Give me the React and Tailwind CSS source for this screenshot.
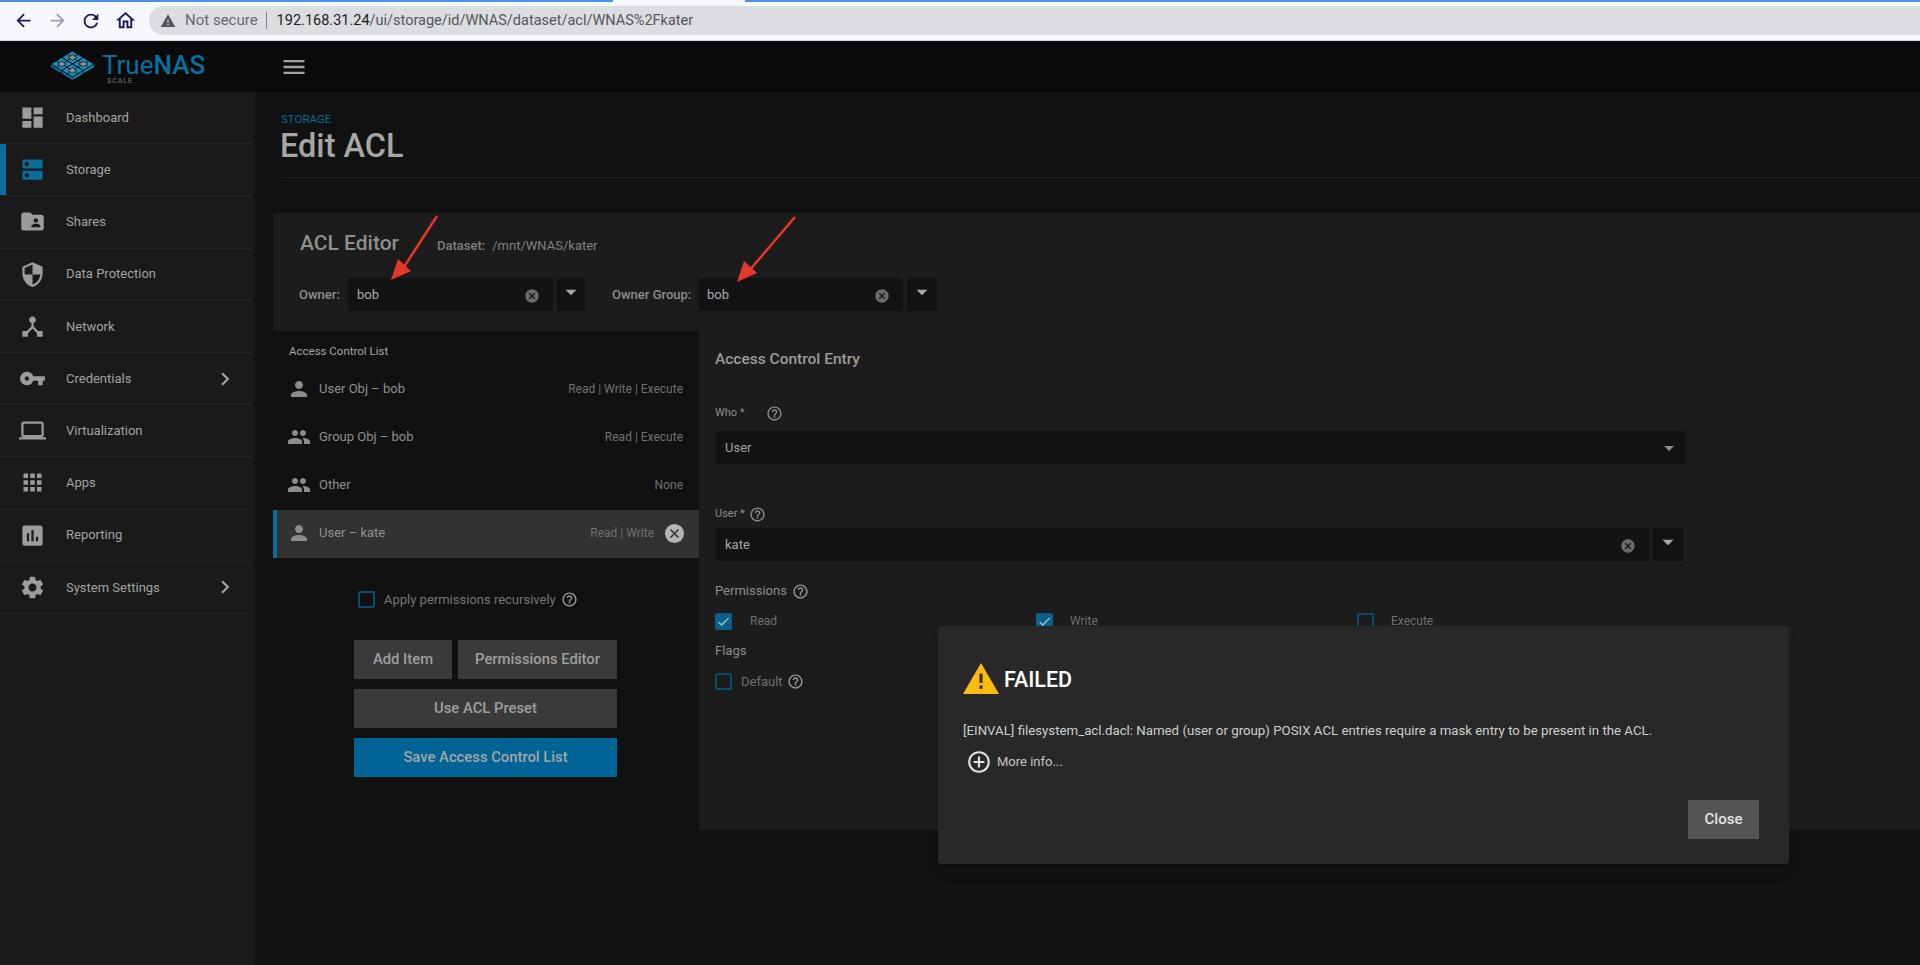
import {
  MdDashboard,
  MdDns,
  MdFolderShared,
  MdSecurity,
  MdDeviceHub,
  MdVpnKey,
  MdLaptop,
  MdApps,
  MdAssessment,
  MdSettings,
  MdChevronRight,
  MdPerson,
  MdGroup,
  MdCancel,
  MdHelpOutline,
  MdWarning,
  MdAddCircleOutline,
  MdArrowDropDown,
  MdCheck,
  MdMenu,
  MdArrowBack,
  MdArrowForward,
  MdRefresh,
  MdOutlineHome,
} from "react-icons/md";

const navItems = [
  { label: "Dashboard", icon: MdDashboard },
  { label: "Storage", icon: MdDns, active: true },
  { label: "Shares", icon: MdFolderShared },
  { label: "Data Protection", icon: MdSecurity },
  { label: "Network", icon: MdDeviceHub },
  { label: "Credentials", icon: MdVpnKey, more: true },
  { label: "Virtualization", icon: MdLaptop },
  { label: "Apps", icon: MdApps },
  { label: "Reporting", icon: MdAssessment },
  { label: "System Settings", icon: MdSettings, more: true },
];

const aclRows = [
  { label: "User Obj – bob", perms: "Read | Write | Execute", icon: MdPerson },
  { label: "Group Obj – bob", perms: "Read | Execute", icon: MdGroup },
  { label: "Other", perms: "None", icon: MdGroup },
  { label: "User – kate", perms: "Read | Write", icon: MdPerson, selected: true },
];

const logoCells = [
  [21.5, 6.5],
  [10.75, 13],
  [32.25, 13],
  [21.5, 19.5],
];

function TrueNasLogo() {
  return (
    <svg width="43" height="29" viewBox="0 0 43 29" className="shrink-0">
      <polygon points="0,13 21.5,26 21.5,29 0,16" fill="#0e6d98" />
      <polygon points="43,13 21.5,26 21.5,29 43,16" fill="#1a80ab" />
      <path d="M10.75 19.5v3M32.25 19.5v3" stroke="#0b0b0b" strokeWidth="0.8" />
      {logoCells.map(([cx, cy]) => (
        <g key={`${cx}-${cy}`}>
          <polygon
            points={`${cx - 10.75},${cy} ${cx},${cy - 6.5} ${cx + 10.75},${cy} ${cx},${cy + 6.5}`}
            fill="#1f8cba"
            stroke="#0b0b0b"
            strokeWidth="0.9"
          />
          <path
            d={`M${cx - 2} ${cy - 1.2} L${cx - 6} ${cy - 3.6} M${cx + 2} ${cy + 1.2} L${cx + 6} ${cy + 3.6} M${cx + 2} ${cy - 1.2} L${cx + 6} ${cy - 3.6} M${cx - 2} ${cy + 1.2} L${cx - 6} ${cy + 3.6}`}
            stroke="#0b0b0b"
            strokeWidth="0.8"
          />
          <polygon
            points={`${cx - 4.5},${cy} ${cx},${cy - 2.8} ${cx + 4.5},${cy} ${cx},${cy + 2.8}`}
            fill="#8c8c8c"
            stroke="#0b0b0b"
            strokeWidth="0.7"
          />
        </g>
      ))}
    </svg>
  );
}

function ChromeBar() {
  return (
    <div className="h-[41px] bg-[#f7f8fd] shrink-0 flex flex-col border-b border-[#d5d5e2]">
      <div className="flex h-[2px] shrink-0">
        <div className="w-[613px] bg-[#4a90e8]" />
        <div className="w-[132px]" />
        <div className="flex-1 bg-[#4a90e8]" />
      </div>
      <div className="flex items-start pl-[6px] pt-[4px] flex-1">
        <div className="w-[34px] h-[29px] flex items-center justify-center text-[#1c1c50]">
          <MdArrowBack size={21} />
        </div>
        <div className="w-[34px] h-[29px] flex items-center justify-center text-[#9b9bb6]">
          <MdArrowForward size={21} />
        </div>
        <div className="w-[34px] h-[29px] flex items-center justify-center text-[#1c1c50]">
          <MdRefresh size={22} />
        </div>
        <div className="w-[34px] h-[29px] flex items-center justify-center text-[#1c1c50]">
          <MdOutlineHome size={23} />
        </div>
        <div className="ml-[7px] flex-1 h-[29px] rounded-l-full bg-[#dcdde0] flex items-center pl-[11px] text-[14.5px]">
          <MdWarning size={16} className="text-[#55565a]" />
          <span className="ml-[9px] text-[15px] text-[#66676c]">Not secure</span>
          <span className="ml-[8px] w-px h-[17px] bg-[#808185]" />
          <span className="ml-[10px] text-[#202124]">192.168.31.24</span>
          <span className="text-[#54565b]">/ui/storage/id/WNAS/dataset/acl/WNAS%2Fkater</span>
        </div>
      </div>
    </div>
  );
}

function TopBar() {
  return (
    <div className="h-[51px] shrink-0 flex bg-[#0b0b0b]">
      <div className="w-[255px] flex items-start pl-[51px] pt-[10px] relative">
        <TrueNasLogo />
        <div className="ml-[8px] mt-[1px] leading-none">
          <div className="text-[26px] text-[#0a6f9d]">
            True<span className="font-medium">NAS</span>
          </div>
          <div className="text-[7px] text-[#7c7c7c] tracking-[1px] ml-[5px]">SCALE</div>
        </div>
      </div>
      <div className="pl-[25px] flex items-center text-[#a3a3a3]">
        <MdMenu size={28} />
      </div>
    </div>
  );
}

function Sidebar() {
  return (
    <aside className="w-[255px] shrink-0 bg-[#1a1a1a] border-r border-[#171717]">
      {navItems.map((item) => {
        const Icon = item.icon;
        return (
          <div
            key={item.label}
            className="h-[52.2px] relative flex items-center border-b border-[#232323] text-[13px] text-[#a2a2a2]"
          >
            {item.active && <div className="absolute left-0 top-0 bottom-0 w-[6px] bg-[#0a6d9c]" />}
            <div className="w-[66px] flex justify-center pr-[2px]">
              <Icon size={27} className={item.active ? "text-[#0a6d9c]" : "text-[#9c9c9c]"} />
            </div>
            <span>{item.label}</span>
            {item.more && <MdChevronRight size={26} className="absolute left-[212px] text-[#a2a2a2]" />}
          </div>
        );
      })}
    </aside>
  );
}

function Combo({ value, width }) {
  return (
    <div className={`${width} h-[35px] bg-[#131313] border border-[#1c1c1c] flex items-center pl-[9px] pr-[13px]`}>
      <span className="flex-1 text-[13px] text-[#a8a8a8]">{value}</span>
      <MdCancel size={16} className="text-[#6c6c6c] mt-[2px]" />
    </div>
  );
}

function DropBtn({ width }) {
  return (
    <div className={`${width} h-[35px] ml-[2px] bg-[#131313] border border-[#1c1c1c] flex items-center justify-center`}>
      <MdArrowDropDown size={26} className="text-[#a8a8a8] -mt-[5px]" />
    </div>
  );
}

function Check({ checked }) {
  return checked ? (
    <div className="w-[17px] h-[17px] rounded-[2px] bg-[#0a6088] flex items-center justify-center">
      <MdCheck size={15} className="text-[#9fc2d3]" />
    </div>
  ) : (
    <div className="w-[17px] h-[17px] rounded-[2px] border-2 border-[#084d6e]" />
  );
}

function AclList() {
  return (
    <div className="w-[426px] shrink-0 bg-[#111111]">
      <div className="h-[34.5px] pl-[16px] flex items-end text-[11.5px] text-[#a5a5a5] pb-[5px]">Access Control List</div>
      {aclRows.map((row) => {
        const Icon = row.icon;
        return (
          <div
            key={row.label}
            className={
              row.selected
                ? "h-[48px] pb-[1px] flex items-center border-l-4 border-[#0a6d9c] bg-[#323232] pl-[10px] pr-[16px]"
                : "h-[48px] pb-[1px] flex items-center pl-[14px] pr-[16px]"
            }
          >
            <Icon size={24} className="text-[#8c8c8c] shrink-0" />
            <span className="ml-[8px] flex-1 text-[13px] text-[#8f8f8f]">{row.label}</span>
            <span className="text-[12px] text-[#707070]">{row.perms}</span>
            {row.selected && (
              <span className="ml-[11px] -mr-[1px] w-[19px] h-[19px] rounded-full bg-[#b5b5b5] flex items-center justify-center text-[#333]">
                <svg width="11" height="11" viewBox="0 0 11 11">
                  <path d="M1.5 1.5 9.5 9.5M9.5 1.5 1.5 9.5" stroke="currentColor" strokeWidth="1.6" />
                </svg>
              </span>
            )}
          </div>
        );
      })}
      <div className="mt-[33px] ml-[85px] flex items-center h-[18px]">
        <Check />
        <span className="ml-[9px] text-[13px] text-[#767676]">Apply permissions recursively</span>
        <MdHelpOutline size={17} className="ml-[5px] text-[#9a9a9a]" />
      </div>
      <div className="ml-[81px] w-[263px] mt-[31px] flex flex-col gap-[10px]">
        <div className="flex gap-[6px]">
          <div className="w-[98px] h-[39px] pt-[1px] bg-[#3a3a3a] flex items-center justify-center text-[14.8px] font-medium text-[#9f9f9f]">
            Add Item
          </div>
          <div className="flex-1 h-[39px] pt-[1px] bg-[#3a3a3a] flex items-center justify-center text-[14.8px] font-medium text-[#9f9f9f]">
            Permissions Editor
          </div>
        </div>
        <div className="h-[39px] pt-[1px] bg-[#3a3a3a] flex items-center justify-center text-[14.8px] font-medium text-[#9f9f9f]">
          Use ACL Preset
        </div>
        <div className="h-[39px] pt-[1px] bg-[#006496] flex items-center justify-center text-[14.8px] font-medium text-[#a5a5a5]">
          Save Access Control List
        </div>
      </div>
    </div>
  );
}

function EntryForm() {
  return (
    <div className="flex-1 pl-[16px] relative">
      <div className="h-[27px] mt-[15px] flex items-center text-[15.5px] font-medium text-[#9b9b9b]">Access Control Entry</div>
      <div className="mt-[32px] h-[16px] flex items-center text-[11px] text-[#8d8d8d]">
        Who *
        <MdHelpOutline size={17} className="ml-[21px] text-[#8d8d8d]" />
      </div>
      <div className="mt-[9px] w-[972px] h-[35px] bg-[#131313] border border-[#1c1c1c] flex items-center pl-[9px] pr-[5px] text-[13px] text-[#a0a0a0]">
        <span className="flex-1">User</span>
        <MdArrowDropDown size={24} className="text-[#909090]" />
      </div>
      <div className="mt-[41px] h-[16px] flex items-center text-[11px] text-[#8d8d8d]">
        User *
        <MdHelpOutline size={17} className="ml-[4px] text-[#8d8d8d]" />
      </div>
      <div className="mt-[5px] flex">
        <Combo value="kate" width="w-[935px]" />
        <DropBtn width="w-[32px]" />
      </div>
      <div className="mt-[20px] h-[18px] flex items-center text-[13px] text-[#8d8d8d]">
        Permissions
        <MdHelpOutline size={17} className="ml-[5px] text-[#9a9a9a]" />
      </div>
      <div className="mt-[12px] flex items-center text-[12px] text-[#707070]">
        <div className="w-[321px] flex items-center">
          <Check checked />
          <span className="ml-[18px]">Read</span>
        </div>
        <div className="w-[321px] flex items-center">
          <Check checked />
          <span className="ml-[17px]">Write</span>
        </div>
        <div className="flex items-center">
          <Check />
          <span className="ml-[17px]">Execute</span>
        </div>
      </div>
      <div className="mt-[13px] h-[16px] flex items-center text-[13px] text-[#8d8d8d]">Flags</div>
      <div className="mt-[13px] flex items-center text-[13px] text-[#707070]">
        <Check />
        <span className="ml-[9px]">Default</span>
        <MdHelpOutline size={17} className="ml-[4px] text-[#9a9a9a]" />
      </div>
    </div>
  );
}

function RedArrow({ className, x, y }) {
  return (
    <svg className={className} width="60" height="70" viewBox="0 0 60 70">
      <path d={`M${x} ${y} L12 56`} stroke="#e2392b" strokeWidth="2.5" fill="none" />
      <polygon points="1,66 8,45 21,57" fill="#e2392b" />
    </svg>
  );
}

function ErrorDialog() {
  return (
    <div className="absolute left-[938px] top-[626px] w-[851px] h-[238px] bg-[#282828] rounded-[4px] shadow-lg pl-[25px] pr-[30px] pt-[34px] flex flex-col">
      <div className="flex items-center h-[36px]">
        <svg width="36" height="31" viewBox="0 0 36 31" className="shrink-0">
          <polygon points="18,0 36,31 0,31" fill="#fdbb0f" />
          <rect x="16.4" y="10.5" width="3.2" height="9.5" fill="#3a3320" />
          <rect x="16.4" y="22.5" width="3.2" height="3.4" fill="#3a3320" />
        </svg>
        <span className="ml-[5px] mt-[4px] text-[21.5px] font-medium text-white">FAILED</span>
      </div>
      <div className="mt-[26px] text-[13.25px] leading-[18px] text-[#cfcfcf] whitespace-nowrap">
        [EINVAL] filesystem_acl.dacl: Named (user or group) POSIX ACL entries require a mask entry to be present in the ACL.
      </div>
      <div className="mt-[9px] ml-[3px] flex items-center text-[13px] text-[#c4c4c4]">
        <MdAddCircleOutline size={26} className="text-[#e2e2e2]" />
        <span className="ml-[5px]">More info...</span>
      </div>
      <div className="mt-auto mb-[25px] self-end w-[71px] h-[39px] bg-[#555555] flex items-center justify-center text-[15px] font-medium text-[#e4e4e4]">
        Close
      </div>
    </div>
  );
}

export default function App() {
  return (
    <div className="relative w-full h-[965px] overflow-hidden flex flex-col bg-[#111111] font-['Roboto',sans-serif]">
      <ChromeBar />
      <TopBar />
      <div className="flex flex-1 min-h-0">
        <Sidebar />
        <main className="flex-1 min-w-0 pl-[18px] bg-[#111111]">
          <div className="ml-[8px] pt-[20px] h-[86px] border-b border-[#202020]">
            <div className="text-[11.5px] leading-[14px] text-[#0a6a96]">STORAGE</div>
            <div className="text-[32.5px] leading-[40px] font-medium text-[#a6a6a6] -ml-[1px]">Edit ACL</div>
          </div>
          <div className="mt-[35px] bg-[#1c1c1c] h-[617px] flex flex-col">
            <div className="h-[118px] shrink-0 pl-[27px] pt-[18px]">
              <div className="flex items-center h-[26px]">
                <span className="text-[21px] font-medium text-[#8f8f8f]">ACL Editor</span>
                <span className="ml-[38px] mt-[3px] text-[13px] font-medium text-[#808080]">Dataset:</span>
                <span className="ml-[7px] mt-[3px] text-[13px] text-[#808080]">/mnt/WNAS/kater</span>
              </div>
              <div className="mt-[20px] flex items-center">
                <span className="text-[13px] font-medium text-[#8d8d8d] -ml-[1px] w-[48px]">Owner:</span>
                <Combo value="bob" width="w-[207px]" />
                <DropBtn width="w-[30px]" />
                <span className="ml-[26px] text-[13px] font-medium text-[#8d8d8d] w-[85px]">Owner Group:</span>
                <Combo value="bob" width="w-[207px]" />
                <DropBtn width="w-[32px]" />
              </div>
            </div>
            <div className="flex flex-1 min-h-0">
              <AclList />
              <EntryForm />
            </div>
          </div>
        </main>
      </div>
      <RedArrow className="absolute left-[390px] top-[214px]" x="47" y="2" />
      <RedArrow className="absolute left-[736px] top-[216px]" x="59" y="1" />
      <ErrorDialog />
    </div>
  );
}
